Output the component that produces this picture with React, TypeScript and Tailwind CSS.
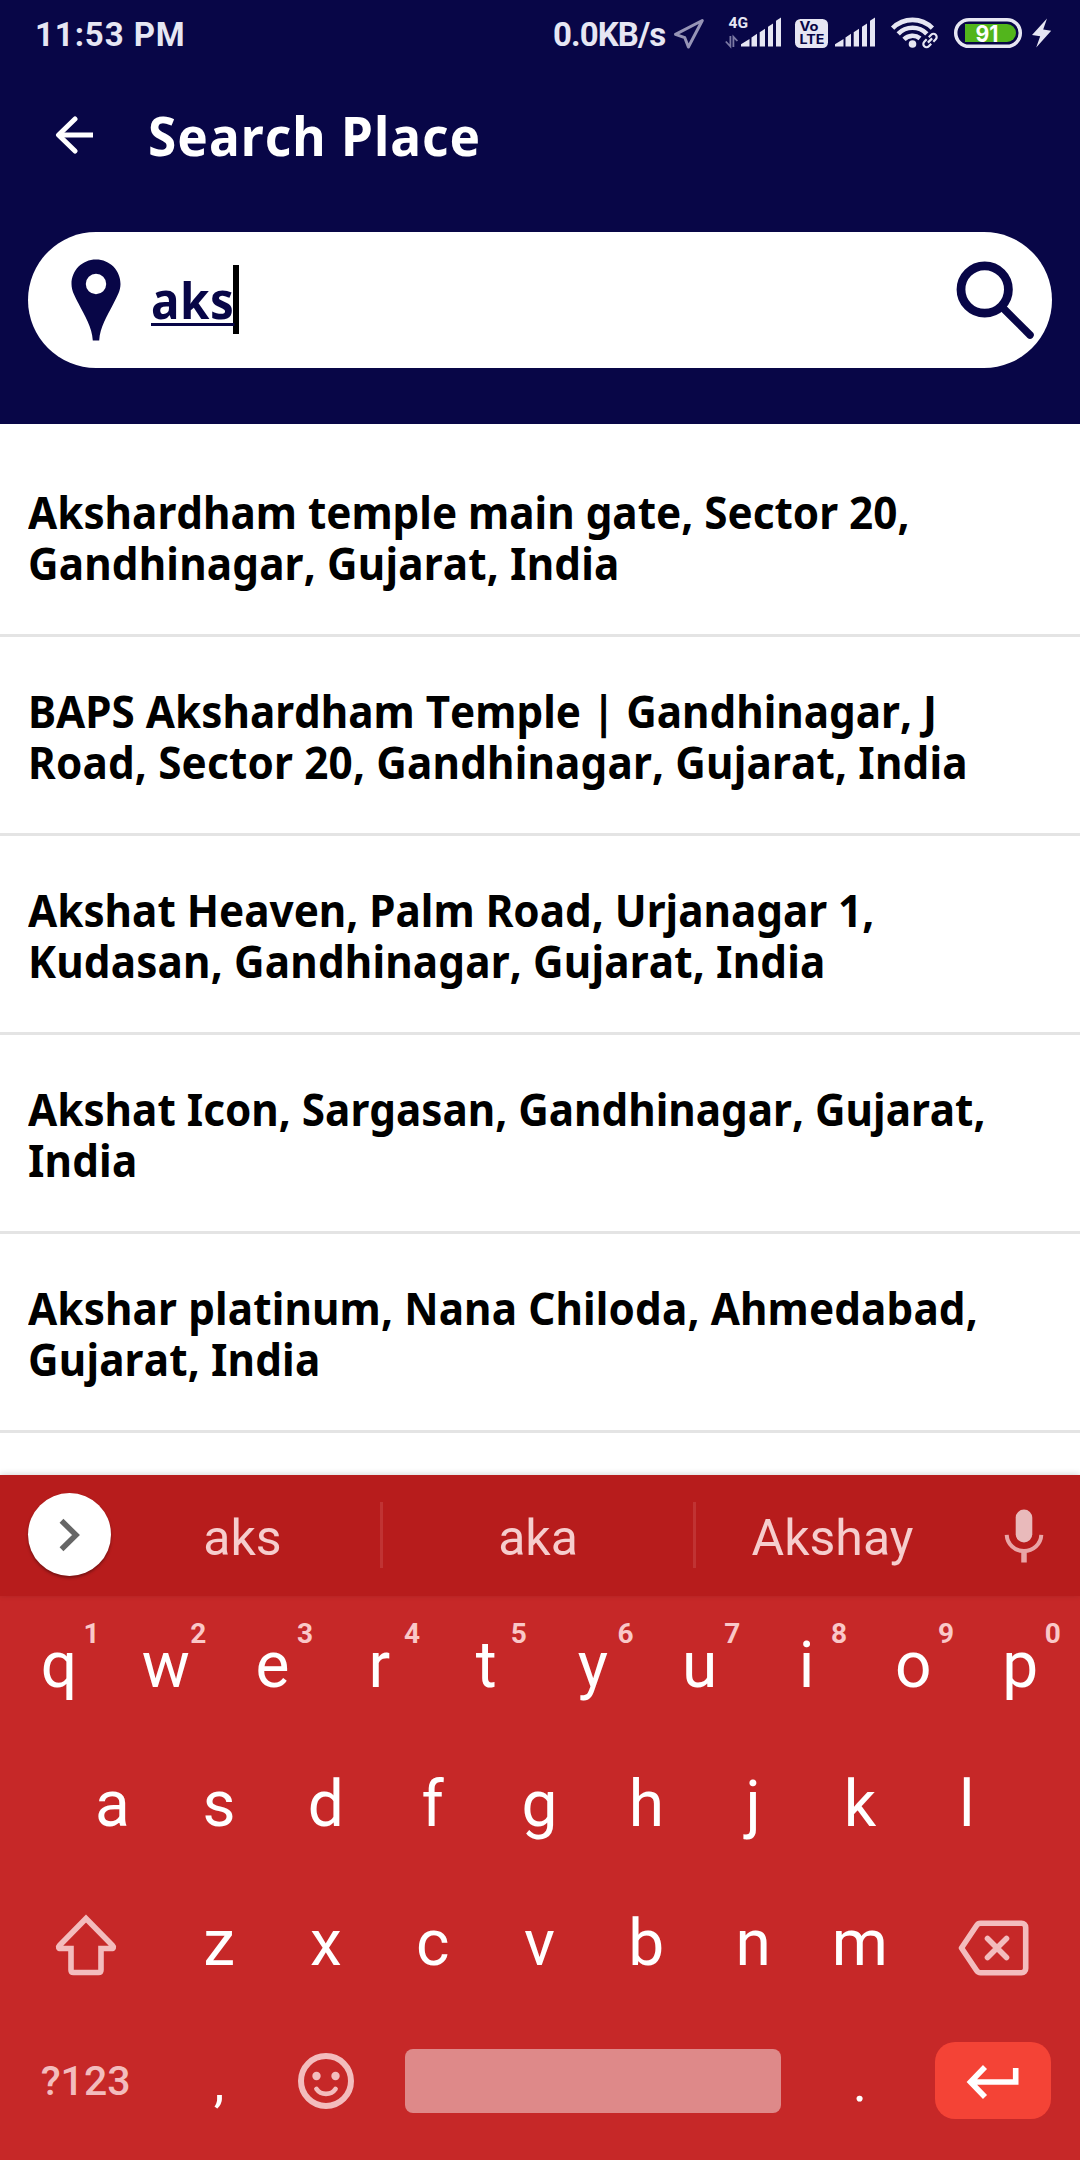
import type { ReactNode } from 'react';

const places: { first: string; second: string; firstTracking?: string }[] = [
  { first: 'Akshardham temple main gate, Sector 20,', second: 'Gandhinagar, Gujarat, India' },
  { first: 'BAPS Akshardham Temple | Gandhinagar, J', second: 'Road, Sector 20, Gandhinagar, Gujarat, India' },
  { first: 'Akshat Heaven, Palm Road, Urjanagar 1,', second: 'Kudasan, Gandhinagar, Gujarat, India' },
  { first: 'Akshat Icon, Sargasan, Gandhinagar, Gujarat,', second: 'India' },
  { first: 'Akshar platinum, Nana Chiloda, Ahmedabad,', second: 'Gujarat, India', firstTracking: 'tracking-[0.14px]' },
];

function SignalBars() {
  return (
    <g fill="#e6e6f3">
      <path d="M0 46.5v-2.2L8.5 39v7.5z" />
      <path d="M10.5 46.5v-9l5.5-3.7v12.7z" />
      <path d="M18.7 46.5V32.3l5.3-3.6v17.8z" />
      <path d="M27 46.5V26.8l5-3.4v23.1z" />
      <path d="M35 46.5V20.8l5-3.4v29.1z" />
    </g>
  );
}

function StatusBar() {
  return (
    <div className="flex h-[68px] items-center pl-[35px] pr-7 font-['Roboto',sans-serif] text-[33px] leading-[40px] font-bold text-[#e6e6f3]">
      <span className="w-[518px] pt-px tracking-[0.9px] whitespace-nowrap">11:53 PM</span>
      <span className="w-[119px] pt-px tracking-[-0.9px] whitespace-nowrap">0.0KB/s</span>
      <svg className="h-[68px] w-[36px]" viewBox="672 0 36 68" fill="none">
        <path d="M702.3 20.5 675.5 34.3l9.3 3.4 3.6 9.3z" stroke="#9694b6" strokeWidth="3" strokeLinejoin="round" />
      </svg>
      <svg className="h-[68px] w-[82px]" viewBox="708 0 82 68">
        <text x="728.6" y="27.8" fontSize="15" fontWeight="700" fill="#e6e6f3" textLength="19.5" lengthAdjust="spacingAndGlyphs">4G</text>
        <g stroke="#7b79a3" strokeWidth="1.8" fill="none">
          <path d="M730.4 36v10.5l-4.6-5" />
          <path d="M733.4 47V36.8l4 4.2" />
        </g>
        <g transform="translate(741 0)"><SignalBars /></g>
      </svg>
      <svg className="h-[68px] w-[42px]" viewBox="790 0 42 68">
        <rect x="795" y="19" width="33" height="29" rx="5.5" fill="#e6e6f3" />
        <g fill="#080647" fontWeight="700" fontFamily="Inter, sans-serif" fontSize="12.5">
          <text x="799.5" y="31.4" textLength="19" lengthAdjust="spacingAndGlyphs">Vo</text>
          <text x="799.5" y="44.4" textLength="25" lengthAdjust="spacingAndGlyphs">LTE</text>
        </g>
      </svg>
      <svg className="h-[68px] w-[52px]" viewBox="832 0 52 68">
        <g transform="translate(835 0)"><SignalBars /></g>
      </svg>
      <svg className="h-[68px] w-[62px]" viewBox="884 0 62 68" fill="none">
        <circle cx="912.5" cy="44" r="3.8" fill="#e6e6f3" />
        <g stroke="#e6e6f3" strokeWidth="4.6">
          <path d="M892.6 28.2a28 28 0 0 1 39.8 0" />
          <path d="M898.2 33.8a20 20 0 0 1 28.6 0" />
          <path d="M904 39.4a12 12 0 0 1 16-1" />
        </g>
        <g transform="rotate(-45 930 40.5)" stroke="#e6e6f3" strokeWidth="2.2">
          <path d="M928.5 37.3h-3.4a3.2 3.2 0 0 0 0 6.4h3.4M931.5 43.7h3.4a3.2 3.2 0 0 0 0-6.4h-3.4M927 40.5h6" />
        </g>
      </svg>
      <svg className="h-[68px] w-[80px]" viewBox="946 0 80 68">
        <rect x="955.7" y="19.7" width="64.6" height="26.6" rx="13.3" fill="none" stroke="#e6e6f3" strokeWidth="3.5" />
        <path d="M965 24h42a9 9 0 0 1 0 18h-42z" fill="#52b51c" />
        <text x="975.5" y="41.6" fontSize="23.5" fontWeight="700" fontFamily="Inter, sans-serif" fill="#fff" textLength="23" lengthAdjust="spacingAndGlyphs">91</text>
      </svg>
      <svg className="h-[68px] w-[26px]" viewBox="1026 0 26 68">
        <path d="M1047 18.5 1032 35l8.2 1.2-4 11.3 15-16.8-8-1.2z" fill="#e6e6f3" />
      </svg>
    </div>
  );
}

function Header() {
  return (
    <header className="h-[424px] bg-[#080647]">
      <StatusBar />
      <div className="flex h-[134px] items-center pl-[55px]">
        <svg className="h-[38px] w-[38px]" viewBox="0 0 38 38" fill="none" stroke="#fff" strokeWidth="5" strokeLinecap="round" strokeLinejoin="round">
          <path strokeLinecap="butt" d="M3 19h35" />
          <path d="M20 3 3.5 19 20 35" />
        </svg>
        <h1 className="ml-[55px] origin-left scale-x-95 font-['Noto_Sans',sans-serif] text-[54px] leading-[60px] font-bold tracking-[1.1px] whitespace-nowrap text-white [font-kerning:none]">Search Place</h1>
      </div>
      <div className="mx-7 mt-[30px] flex h-[136px] items-center rounded-full bg-white pr-4 pl-[42px]">
        <svg className="h-[84px] w-[52px] shrink-0" viewBox="0 0 52 84">
          <path fillRule="evenodd" fill="#080647" d="M26 1.5C12.3 1.5 1.5 12.3 1.5 26c0 7 3.5 12.5 7 19.5C15 58 22 69 22.8 82.5h6.4C30 69 37 58 43.5 45.5c3.5-7 7-12.5 7-19.5C50.5 12.3 39.7 1.5 26 1.5Zm0 14.3a10.2 10.2 0 1 1 0 20.4 10.2 10.2 0 0 1 0-20.4Z" />
        </svg>
        <div className="ml-[29px] flex flex-1 items-center">
          <span className="w-[83px] origin-left scale-x-95 font-['Noto_Sans',sans-serif] text-[50px] leading-[68px] font-bold tracking-[0.6px] text-[#080647] underline decoration-[2.5px] underline-offset-[4px]">aks</span>
          <span className="-ml-px -mt-px h-[69px] w-[6px] bg-black" />
        </div>
        <svg className="h-[80px] w-[80px] shrink-0" viewBox="0 0 80 80" fill="none" stroke="#080647">
          <circle cx="28.7" cy="29.5" r="23.7" strokeWidth="8.8" />
          <path d="M47.5 48.5 74 75" strokeWidth="7.5" strokeLinecap="round" />
        </svg>
      </div>
    </header>
  );
}

function PlaceList() {
  return (
    <ul className="h-[1051px] overflow-hidden bg-white pt-3.5">
      {places.map(({ first, second, firstTracking }) => (
        <li key={first} className="h-[199px] border-b-3 border-[#e4e4e4] pt-[49px] pl-7 font-['Noto_Sans',sans-serif] text-[44px] leading-[51px] font-bold whitespace-nowrap text-black [font-kerning:none]">
          <div className="w-[1060px] origin-left scale-x-96">
            <div className={firstTracking}>{first}</div>
            <div className="tracking-[0.18px]">{second}</div>
          </div>
        </li>
      ))}
    </ul>
  );
}

function SuggestionBar() {
  return (
    <div className="relative flex h-[121px] items-center bg-[#b71c1c] pl-7 font-['Roboto',sans-serif] text-[50px] leading-[60px] text-[#f6cdcd] shadow-[0_-1px_6px_rgba(0,0,0,0.16)]">
      <button className="-mt-0.5 flex h-[83px] w-[83px] items-center justify-center rounded-full bg-white shadow-[0_2px_3px_rgba(0,0,0,0.35)]">
        <svg className="h-[34px] w-[22px]" viewBox="0 0 22 34" fill="none" stroke="#666" strokeWidth="5.5">
          <path d="M2.5 2.8 17 17 2.5 31.2" />
        </svg>
      </button>
      <span className="w-[269px] pt-1 pr-1.5 text-center">aks</span>
      <span className="-mt-px h-[66px] w-[3px] bg-[#c03333]" />
      <span className="w-[310px] pt-1 text-center">aka</span>
      <span className="-mt-px h-[66px] w-[3px] bg-[#c03333]" />
      <span className="w-[273px] pt-1 text-center">Akshay</span>
      <svg className="ml-[35px] h-[54px] w-[40px]" viewBox="0 0 40 54" fill="none">
        <rect x="11.7" y="0.5" width="16.6" height="33" rx="8.3" fill="#e9babb" />
        <path d="M2.7 25.8c.5 9.5 8.2 16.200 17.300 16.200s16.800-6.700 17.300-16.200" stroke="#e9a5a6" strokeWidth="4" />
        <path d="M20 43v10.5" stroke="#e9a5a6" strokeWidth="5.5" />
      </svg>
    </div>
  );
}

function Key({ children, hint }: { children: ReactNode; hint?: string }) {
  return (
    <div className="relative col-span-2 flex items-center justify-center">
      {children}
      {hint && <span className="absolute top-[21px] left-[78px] text-[28px] leading-8 font-bold text-[#fac8c8]">{hint}</span>}
    </div>
  );
}

function WideKey({ children }: { children: ReactNode }) {
  return <div className="col-span-3 flex items-center justify-center">{children}</div>;
}

function Keyboard() {
  return (
    <div className="h-[564px] bg-[#c62828] pt-px pr-[6.5px] pb-2 pl-[5.5px] font-['Roboto',sans-serif] text-[64px] leading-[76px] text-white">
      <div className="grid h-full grid-rows-4">
        <div className="grid grid-cols-20">
          {[...'qwertyuiop'].map((k, i) => <Key key={k} hint={String((i + 1) % 10)}>{k}</Key>)}
        </div>
        <div className="grid grid-cols-18 px-[53.4px]">
          {[...'asdfghjkl'].map((k) => <Key key={k}>{k}</Key>)}
        </div>
        <div className="grid grid-cols-20">
          <WideKey>
            <svg className="mt-0.5 h-[62px] w-[62px]" viewBox="0 0 62 62" fill="none" stroke="#f3bcbd" strokeWidth="5.6">
              <path d="M31 4.5 4.5 31.5c-1.500 1.500-1 3 1 3H16V56c0 1.500.8 2.500 2.500 2.500h25c1.700 0 2.500-1 2.500-2.500V34.500h10.500c2 0 2.500-1.500 1-3z" />
            </svg>
          </WideKey>
          {[...'zxcvbnm'].map((k) => <Key key={k}>{k}</Key>)}
          <WideKey>
            <svg className="mt-2 mr-px h-[56px] w-[72px]" viewBox="0 0 72 56" fill="none" stroke="#f3bcbd" strokeWidth="5.6" strokeLinejoin="round">
              <path d="M23.5 3.3h41c2.5 0 4.200 1.700 4.200 4.200v41c0 2.500-1.700 4.200-4.200 4.200h-41c-1.700 0-3-.8-3.900-2.200L4.500 28 19.600 5.500c.9-1.400 2.200-2.200 3.900-2.200Z" />
              <path d="m30.5 18.5 19 19m0-19-19 19" strokeLinecap="round" />
            </svg>
          </WideKey>
        </div>
        <div className="-mt-0.5 mb-0.5 grid grid-cols-20">
          <WideKey><span className="text-[41px] leading-[48px] font-medium text-[#f3bcbd]">?123</span></WideKey>
          <Key><span className="pt-1 text-[54px] leading-[64px]">,</span></Key>
          <Key>
            <svg className="h-[58px] w-[58px]" viewBox="0 0 58 58" fill="none" stroke="#f3bcbd">
              <circle cx="29" cy="29" r="25" strokeWidth="6" />
              <circle cx="19.5" cy="24" r="4.2" fill="#f3bcbd" stroke="none" />
              <circle cx="38.5" cy="24" r="4.2" fill="#f3bcbd" stroke="none" />
              <path d="M19.5 37c4.500 6.500 14.500 6.500 19 0" strokeWidth="4.8" strokeLinecap="round" />
            </svg>
          </Key>
          <div className="col-span-8 flex items-center justify-center">
            <div className="h-16 w-[376px] rounded-[8px] bg-[#de8989]" />
          </div>
          <Key><span className="pt-1 text-[54px] leading-[64px]">.</span></Key>
          <WideKey>
            <div className="-mt-px flex h-[77px] w-[116px] items-center justify-center rounded-[20px] bg-[#f44336]">
              <svg className="mt-1 h-[34px] w-[54px]" viewBox="0 0 54 34" fill="none" stroke="#fff" strokeWidth="5.6">
                <path d="M19 2 4.500 17 19 32M5 17h44.700V3" />
              </svg>
            </div>
          </WideKey>
        </div>
      </div>
    </div>
  );
}

export default function App() {
  return (
    <main className="h-[2160px] w-[1080px] overflow-hidden bg-white">
      <Header />
      <PlaceList />
      <SuggestionBar />
      <Keyboard />
    </main>
  );
}
